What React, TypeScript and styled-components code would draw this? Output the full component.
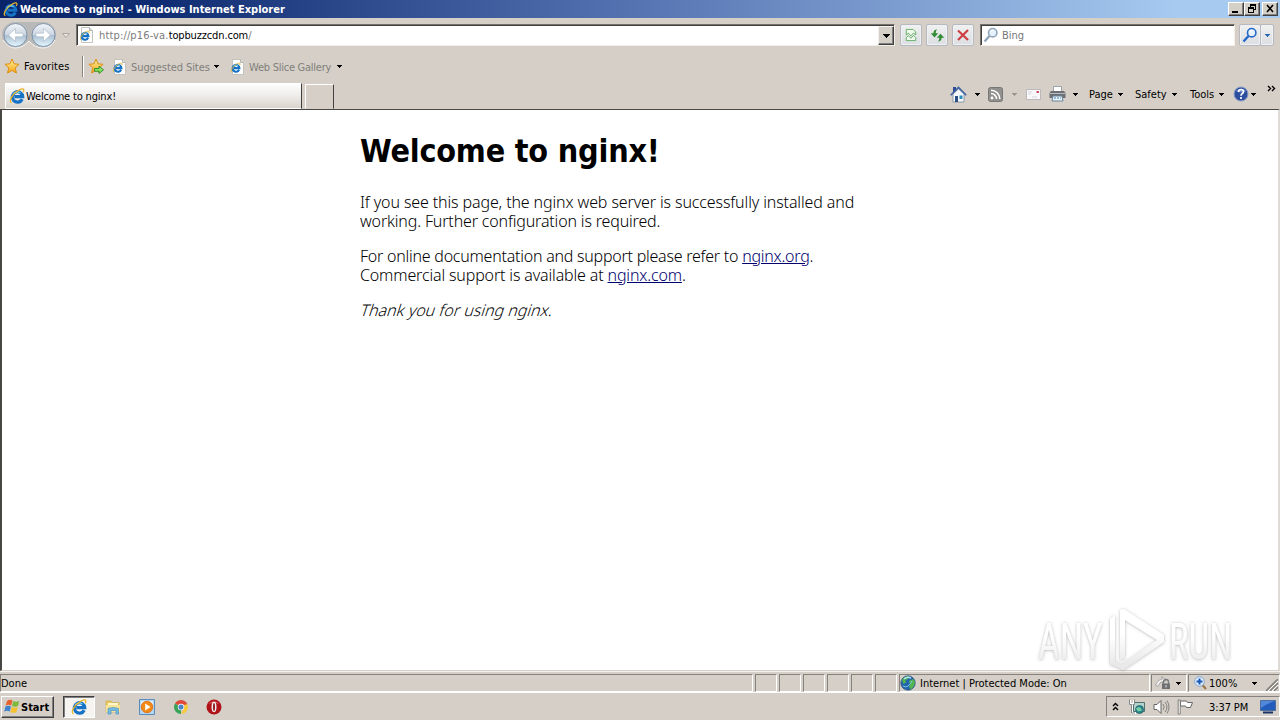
import React from 'react';
import styled, { createGlobalStyle } from 'styled-components';

const GlobalStyle = createGlobalStyle`
    * {
        box-sizing: border-box;
    }

    body {
        margin: 0;
        overflow: hidden;
        background: #d4d0c8;
        color: #000;
        font-family: "DejaVu Sans Condensed", "DejaVu Sans", sans-serif;
        font-stretch: condensed;
        font-size: 11px;
    }

    svg {
        flex: none;
    }
`

const Desktop = styled.div`
    position: relative;
    width: 1280px;
    height: 720px;
    display: flex;
    flex-direction: column;
    overflow: hidden;
    background: #d5cfc7;
`

const Row = styled.div<{ $h: number }>`
    display: flex;
    align-items: center;
    flex: none;
    height: ${p => p.$h}px;
`

const TitleBar = styled(Row)`
    padding: 0 2px 0 3px;
    background: linear-gradient(90deg, #0a246a 0%, #0f2c72 12%, #5674b2 50%, #a6caf0 92%);
`

const Label = styled.span<{ $ml?: number, $w?: number, $ls?: number, $color?: string, $bold?: boolean, $drop?: number }>`
    flex: none;
    margin-left: ${p => p.$ml || 0}px;
    padding-top: ${p => p.$drop ?? 2}px;
    width: ${p => p.$w ? p.$w + 'px' : 'auto'};
    letter-spacing: ${p => p.$ls || 0}px;
    color: ${p => p.$color || '#000'};
    font-weight: ${p => p.$bold ? 700 : 400};
    line-height: 14px;
    white-space: nowrap;
`

const Host = styled.span`
    color: #000;
    letter-spacing: -0.14px;
`

const Slot = styled.span<{ $ml?: number, $mt?: number }>`
    display: flex;
    flex: none;
    margin-left: ${p => p.$ml || 0}px;
    margin-top: ${p => p.$mt || 0}px;
`

const Spacer = styled.span`
    flex: 1;
`

const WindowButton = styled.span<{ $ml?: number }>`
    display: flex;
    width: 16px;
    height: 14px;
    margin-left: ${p => p.$ml || 0}px;
    background: #d4d0c8;
    border: 1px solid;
    border-color: #fff #404040 #404040 #fff;
    box-shadow: inset -1px -1px #808080;
`

const NavButtons = styled.div`
    display: flex;
    flex: none;
    width: 56px;
    height: 28px;
    margin-left: 1px;
`

const Field = styled.div<{ $ml: number, $w: number }>`
    display: flex;
    align-items: center;
    flex: none;
    width: ${p => p.$w}px;
    height: 22px;
    margin-left: ${p => p.$ml}px;
    background: #fff;
    border: 1px solid;
    border-color: #75726d #f2efe9 #f2efe9 #75726d;
    box-shadow: inset 1px 1px #403f3d;
`

const DropButton = styled.span`
    display: flex;
    align-items: center;
    justify-content: center;
    width: 16px;
    height: 19px;
    margin-top: 1px;
    background: #d4d0c8;
    border: 1px solid;
    border-color: #f4f2ee #404040 #404040 #f4f2ee;
    box-shadow: inset -1px -1px #808080;
`

const ToolButton = styled.span<{ $ml: number, $w?: number }>`
    display: flex;
    align-items: center;
    justify-content: center;
    flex: none;
    width: ${p => p.$w || 22}px;
    height: 22px;
    margin-left: ${p => p.$ml}px;
    border: 1px solid #b6bac0;
    border-radius: 2px;
    background: linear-gradient(#f1f1f1, #e4e6e8 50%, #dcdfe3);
    box-shadow: inset 0 0 0 1px #f0f1f2;
`

const Divider = styled.span<{ $h: number }>`
    width: 2px;
    height: ${p => p.$h}px;
    border-left: 1px solid #85827d;
    border-right: 1px solid #fff;
`

const TabRow = styled(Row)`
    align-items: flex-start;
`

const Tab = styled.div`
    display: flex;
    align-items: center;
    flex: none;
    width: 297px;
    height: 26px;
    margin: 2px 0 0 5px;
    padding-left: 3px;
    background: linear-gradient(#fefefe, #f0eeec 45%, #d9d4cd);
    border: 1px solid;
    border-color: #fff #404040 transparent #fff;
`

const NewTab = styled.div`
    flex: none;
    width: 29px;
    height: 25px;
    margin: 3px 0 0 3px;
    border: 1px solid;
    border-color: #fff transparent transparent #fff;
    border-right: 1px solid #404040;
`

const CommandBar = styled.div`
    display: flex;
    align-items: center;
    width: 330px;
    height: 26px;
`

const Viewport = styled.main`
    flex: none;
    height: 562px;
    background: #fff;
    border-top: 1px solid #484744;
    border-left: 2px solid #484744;
    border-right: 2px solid #dedad4;
    border-bottom: 1px solid #d4d0c8;
`

const Article = styled.article`
    width: 560px;
    margin-left: 358px;
    font-family: "Noto Sans", "Open Sans", sans-serif;
    font-weight: 300;
    font-size: 16px;
    line-height: 19px;
`

const Heading = styled.h1`
    margin: 0;
    padding-top: 22px;
    height: 83px;
    font-family: "DejaVu Sans Condensed", "DejaVu Sans", sans-serif;
    font-stretch: condensed;
    font-size: 32px;
    line-height: 39px;
    letter-spacing: -0.2px;
    white-space: nowrap;
`

const Line = styled.span<{ $ls: number }>`
    display: block;
    letter-spacing: ${p => p.$ls}px;
    white-space: nowrap;
`

const Slanted = styled.em`
    display: inline-block;
    margin-left: 1px;
    font-style: normal;
    transform: skewX(-18deg);
`

const Paragraph = styled.p`
    margin: 0 0 16px;
`

const Link = styled.a`
    color: #00006e;
    text-decoration: underline;
`

const StatusBar = styled(Row)`
    align-items: flex-start;
    padding-top: 2px;
    border-top: 1px solid #f3f1ed;
    border-bottom: 1px solid #fff;
`

const StatusCell = styled.div<{ $w: number, $ml?: number }>`
    display: flex;
    align-items: center;
    flex: none;
    width: ${p => p.$w}px;
    height: 18px;
    margin-left: ${p => p.$ml || 0}px;
    border: 1px solid;
    border-color: #85827d #fff #fff #85827d;
`

const Taskbar = styled(Row)`
    padding-left: 1px;
`

const StartButton = styled.div`
    display: flex;
    align-items: center;
    width: 53px;
    height: 22px;
    padding-left: 2px;
    border: 1px solid;
    border-color: #fff #404040 #404040 #fff;
    box-shadow: inset -1px -1px #808080;
`

const ActiveTask = styled.div`
    display: flex;
    align-items: center;
    justify-content: center;
    width: 32px;
    height: 22px;
    margin-left: 9px;
    background: #f6f4f1;
    border: 1px solid;
    border-color: #404040 #fff #fff #404040;
    box-shadow: inset 1px 1px #808080;
`

const Tray = styled.div`
    display: flex;
    align-items: center;
    width: 174px;
    height: 21px;
    border: 1px solid;
    border-color: #85827d #fff #fff #85827d;
`

const Watermark = styled.svg`
    position: absolute;
    left: 1030px;
    top: 601px;
`

type iconProps = {
    size?: number
    color?: string
}

const Arrow = ({ color = '#000' }: iconProps): JSX.Element => (
    <svg width="5" height="3" shapeRendering="crispEdges"><path d="M0 0h5v1H4v1H3v1H2V2H1V1H0z" fill={color} /></svg>
)

const Logo = (): JSX.Element => (
    <>
        <path d="M13.200 11.200A5.200 5.200 0 1 1 13.700 8.700H5.300" fill="none" stroke="#1672c4" strokeWidth="3.200" />
        <path d="M4 6Q7.500 2.700 11.500 4.800" fill="none" stroke="#65c4f3" strokeWidth="1.500" />
        <path d="M2.600 14.600C-1 14 3.300 5.500 10 2.100c4.300-2.200 5.800-1.100 4.200 2.200" fill="none" stroke="#e9b42a" strokeWidth="1.300" />
    </>
)

const IeIcon = ({ size = 16 }: iconProps): JSX.Element => (
    <svg width={size} height={size} viewBox="0 0 16 16"><Logo /></svg>
)

const PageIcon = (): JSX.Element => (
    <svg width="16" height="16" viewBox="0 0 16 16">
        <path d="M2.500.500h8l3 3v12h-11z" fill="#fdfdfd" stroke="#c3c2bd" />
        <path d="M10.500.500v3h3" fill="#ddd" stroke="#b5b5b0" />
        <g transform="translate(.5 3.500) scale(.65)"><Logo /></g>
    </svg>
)

const Star = ({ add }: { add?: boolean }): JSX.Element => (
    <svg width="17" height="17" viewBox="0 0 17 17">
        <defs>
            <linearGradient id="gold" x1="0" y1="0" x2="0" y2="1"><stop stopColor="#fff2a0" /><stop offset="1" stopColor="#f5a313" /></linearGradient>
        </defs>
        <path d="M8 1l2.100 4.800 5 .5-3.800 3.500 1.100 5.200L8 12.400 3.600 15l1.100-5.200L.9 6.300l5-.5z" fill="url(#gold)" stroke="#de8e16" />
        {add && <path d="M6.500 10.500H11V8.200l4.500 3.600-4.500 3.600v-2.200H6.500z" fill="#8be25f" stroke="#25892b" strokeWidth=".9" />}
    </svg>
)

const BackForward = (): JSX.Element => (
    <svg width="56" height="28" viewBox="0 0 56 28">
        <defs>
            <linearGradient id="orb" x1="0" y1="0" x2="0" y2="1">
                <stop stopColor="#f4f6f9" /><stop offset=".48" stopColor="#ccd6e2" /><stop offset=".5" stopColor="#a9bdd0" /><stop offset="1" stopColor="#e5f7ff" />
            </linearGradient>
        </defs>
        <path d="M14 1h28a13 13 0 0 1 0 26q-8 0-14-7-6 7-14 7a13 13 0 0 1 0-26z" fill="#bab9ba" />
        <path d="M2 19q5 8 12 8 8 0 14-7 6 7 14 7 8 0 12-8" fill="none" stroke="#f5f4f2" />
        {[14.5, 42.5].map(x => <circle key={x} cx={x} cy="14" r="11.500" fill="url(#orb)" stroke="#7d93a9" />)}
        <path d="M14.500 7.500L7.500 14l7 6.500v-4.700H22v-3.600h-7.500z" fill="#fff" stroke="#a3b4c4" strokeWidth=".6" />
        <path d="M42.500 7.500l7 6.500-7 6.500v-4.700H35v-3.600h7.500z" fill="#fff" stroke="#a3b4c4" strokeWidth=".6" />
    </svg>
)

const Magnifier = ({ color = '#2468c8' }: iconProps): JSX.Element => (
    <svg width="16" height="16" viewBox="0 0 16 16">
        <path d="M1.500 14.500l5-5.500" stroke={color} strokeWidth="2.400" />
        <circle cx="9.700" cy="5.700" r="4.200" fill="#e5f1fc" stroke={color} strokeWidth="1.600" />
        <path d="M7.500 5q1-2 3-1.700" fill="none" stroke="#fff" />
    </svg>
)

const BrokenPage = (): JSX.Element => (
    <svg width="12" height="14" viewBox="0 0 14 16">
        <path d="M1.500 8V1.500h8l3 3V8L10 5.500 7 9 4 5.800z" fill="#f0faec" stroke="#57a857" />
        <path d="M1.500 14.500V11L4 8.800l3 3 3-3.300 2.500 2.500v3.500z" fill="#f0faec" stroke="#57a857" />
    </svg>
)

const Refresh = (): JSX.Element => (
    <svg width="15" height="15" viewBox="0 0 16 16" fill="#328c35">
        <path d="M7.500 1.500Q3.600 1.800 3.600 5.500H.8L4.800 10 8.800 5.500H6q0-2.500 1.500-4z" />
        <path d="M8.500 14.500q3.900-.3 3.900-4h2.800L11.200 6l-4 4.500H10q0 2.500-1.500 4z" />
    </svg>
)

const House = (): JSX.Element => (
    <svg width="17" height="17" viewBox="0 0 17 17">
        <path d="M3 1h3v5H3z" fill="#304a95" />
        <path d="M3 8l5.500-5L14 8v8H3z" fill="#f5f8fb" stroke="#7a8ba0" strokeWidth=".8" />
        <path d="M.8 9.200l7.700-7.700 7.700 7.700" fill="none" stroke="#3d629f" strokeWidth="1.600" />
        <path d="M5 10h3v6H5z" fill="#2b4f86" />
        <path d="M9.500 9.500h3V13h-3z" fill="#2d8fbd" />
    </svg>
)

const Rss = (): JSX.Element => (
    <svg width="15" height="15" viewBox="0 0 15 15">
        <rect x=".5" y=".5" width="14" height="14" rx="2" fill="#92908d" stroke="#777" />
        <circle cx="4" cy="11" r="1.400" fill="#fff" />
        <path d="M3 6.500a5.500 5.500 0 0 1 5.500 5.500M3 3.200A8.800 8.800 0 0 1 11.800 12" fill="none" stroke="#fff" strokeWidth="1.600" />
    </svg>
)

const Mail = (): JSX.Element => (
    <svg width="15" height="11" viewBox="0 0 15 11">
        <path d="M.5.500h14v10H.5z" fill="#faf9fa" stroke="#bab8bc" />
        <path d="M2 3h4M2 5h3M6 8h5" stroke="#d4d3dd" />
        <path d="M10.500 2h2.500v2h-2.500z" fill="#cf4c66" />
    </svg>
)

const Printer = (): JSX.Element => (
    <svg width="17" height="16" viewBox="0 0 17 16">
        <path d="M4.500.500h8V6h-8z" fill="#fff" stroke="#9aa2aa" />
        <path d="M2 5h13l1.500 2v5h-16V7z" fill="#6d6f73" />
        <path d="M1 7h15v1H1z" fill="#b9bcc0" />
        <path d="M4 10h9l1 5H3z" fill="#eaf3fa" stroke="#69859d" />
        <path d="M5 12h7" stroke="#3e83b5" strokeDasharray="2 1" />
    </svg>
)

const Help = (): JSX.Element => (
    <svg width="16" height="16" viewBox="0 0 16 16">
        <circle cx="8" cy="8" r="7" fill="#2d4e9e" stroke="#8b9dc8" />
        <path d="M3 5a6 5 0 0 1 10 0q-5 3-10 0z" fill="#6c8cd0" />
        <path d="M5.500 6q.2-2.500 2.600-2.500 2.400 0 2.400 2.100 0 1.400-1.400 2.100Q8 8.300 8 9.800M8 11v2" fill="none" stroke="#fff" strokeWidth="1.700" />
    </svg>
)

const Chevrons = ({ up }: { up?: boolean }): JSX.Element => (
    up
        ? <svg width="7" height="9" viewBox="0 0 7 9"><path d="M1 4l2.500-2.500L6 4M1 8l2.500-2.500L6 8" fill="none" stroke="#000" strokeWidth="1.400" /></svg>
        : <svg width="9" height="7" viewBox="0 0 9 7"><path d="M1 1l2.500 2.500L1 6M5 1l2.500 2.500L5 6" fill="none" stroke="#000" strokeWidth="1.400" /></svg>
)

const Globe = (): JSX.Element => (
    <svg width="16" height="16" viewBox="0 0 16 16">
        <circle cx="8" cy="8" r="7.200" fill="#2565ad" stroke="#365782" strokeWidth=".8" />
        <path d="M2 5Q5 0 10 1.500L8 4 5.500 5 6 7.500 3.500 9zM9 6l4-2 2 3-1 4-3 3.500L9 12l1-3z" fill="#52b54d" />
        <path d="M4 4q3-3 7-1" fill="none" stroke="#b3e4f5" strokeWidth="1.400" />
        <path d="M3 11q5 3 9-5" fill="none" stroke="#73c9ec" />
    </svg>
)

const Lock = (): JSX.Element => (
    <svg width="16" height="16" viewBox="0 0 16 16">
        <path d="M.5 10q2.500-6 7-6l-1-2.500 4.500 3.500-3.500 3.500V6.500Q5 6.500 3 11.500z" fill="#f3f2f0" stroke="#98979a" strokeWidth=".8" />
        <path d="M8.500 9V7a2.500 2.500 0 0 1 5 0v2" fill="none" stroke="#77797d" strokeWidth="1.300" />
        <path d="M7 8.500h8V14H7z" fill="#6f7073" />
        <path d="M11 10v2.500" stroke="#ddd" />
    </svg>
)

const ZoomIn = (): JSX.Element => (
    <svg width="13" height="14" viewBox="0 0 13 14">
        <path d="M8 8.500l4 4.500" stroke="#9b7447" strokeWidth="2" />
        <circle cx="5.500" cy="5.500" r="4.800" fill="#e3f0fc" stroke="#7da4d0" />
        <path d="M5.500 2.500v6M2.500 5.500h6" stroke="#1757b5" strokeWidth="2" />
    </svg>
)

const Grip = (): JSX.Element => (
    <svg width="12" height="12" viewBox="0 0 12 12">
        <path d="M0 12L12 0M4 12l8-8M8 12l4-4" stroke="#85827d" strokeWidth="1.600" />
        <path d="M2 12L12 2M6 12l6-6" stroke="#fff" />
    </svg>
)

const WindowsFlag = (): JSX.Element => (
    <svg width="16" height="15" viewBox="0 0 16 15">
        <path d="M3 2q3-2 5.500-.5L7.200 6.600Q4.500 5 1.700 6.700z" fill="#e8602c" />
        <path d="M9.300 2q3 1.400 6 0L14 7q-3 1.600-6 0z" fill="#7fb83b" />
        <path d="M1.500 7.600Q4.300 6 7 7.500l-1.300 5Q3 11 .2 12.700z" fill="#3d83ce" />
        <path d="M7.800 8q3 1.500 6 0l-1.300 5q-3 1.700-6 0z" fill="#f5c12e" />
    </svg>
)

const Explorer = (): JSX.Element => (
    <svg width="16" height="16" viewBox="0 0 16 16">
        <path d="M1 2h5l1 1.500h7V13H1z" fill="#e9c75c" stroke="#cfab48" strokeWidth=".6" />
        <path d="M3 4h10v3H3z" fill="#fff7cd" />
        <path d="M1 6h14v7H1z" fill="#f8e494" />
        <path d="M3 15V9.500Q8 7.500 13.500 9.500V15H11v-3.500H6V15z" fill="#74bce4" stroke="#4d94c5" strokeWidth=".7" />
    </svg>
)

const MediaPlayer = (): JSX.Element => (
    <svg width="16" height="16" viewBox="0 0 16 16">
        <path d="M.5.500h15v15H.5z" fill="#b5d5ef" stroke="#588dbf" />
        <path d="M2 2h12v4H2z" fill="#dcecf8" />
        <circle cx="8" cy="8" r="5.700" fill="#f28a15" stroke="#e3771c" />
        <path d="M6.200 4.500L11.500 8l-5.300 3.500z" fill="#fff" />
    </svg>
)

const Chrome = (): JSX.Element => (
    <svg width="14" height="14" viewBox="0 0 16 16">
        <path d="M8 8L1.100 4A8 8 0 0 1 14.900 4z" fill="#df4939" />
        <path d="M8 8V16A8 8 0 0 1 1.100 4z" fill="#3ba259" />
        <path d="M8 8L14.900 4A8 8 0 0 1 8 16l3-6z" fill="#f6ca3b" />
        <path d="M8 4.500h7.100" stroke="#df4939" />
        <circle cx="8" cy="8" r="3.700" fill="#fff" />
        <circle cx="8" cy="8" r="2.900" fill="#4d82cb" />
    </svg>
)

const Opera = (): JSX.Element => (
    <svg width="16" height="16" viewBox="0 0 16 16">
        <circle cx="8" cy="8" r="7.500" fill="#b01217" />
        <path d="M2.500 5a6.500 6 0 0 1 11 0q-5-2-11 0z" fill="#d6545a" />
        <ellipse cx="8" cy="8" rx="2.500" ry="5.200" fill="#eee" />
        <ellipse cx="8" cy="8" rx="1" ry="4" fill="#91151a" />
    </svg>
)

const Network = (): JSX.Element => (
    <svg width="16" height="16" viewBox="0 0 16 16">
        <path d="M4.500 3.500h11v9h-11z" fill="#b4d3cc" stroke="#53706e" />
        <path d="M1 1v4h4V1M3 5v9h4" fill="none" stroke="#fff" strokeWidth="2" />
        <path d="M.5.500v5h2V14H6M5.500.500v5h-2" fill="none" stroke="#626d6c" strokeWidth=".8" />
        <circle cx="10.500" cy="10.500" r="4" fill="#24858a" stroke="#376f73" />
        <path d="M7 9.500q3-3 5 0l1 2-4 1z" fill="#75d0a8" />
    </svg>
)

const Speaker = (): JSX.Element => (
    <svg width="17" height="16" viewBox="0 0 17 16">
        <path d="M1 5.500h3L8 1.500v13l-4-4H1z" fill="#fff" stroke="#666" />
        <path d="M10 5q2.500 3 0 6M12 3q4 5 0 10M14 1.500q4 6.500 0 13" fill="none" stroke="#85837f" />
    </svg>
)

const Flag = (): JSX.Element => (
    <svg width="17" height="16" viewBox="0 0 17 16">
        <path d="M3.500 2h6l1 1.500h5l-2 5h-4L8.500 7h-5z" fill="#fff" stroke="#666" />
        <path d="M1.200 1v14h2V1z" fill="#fff" stroke="#686764" strokeWidth=".8" />
    </svg>
)

const Monitor = (): JSX.Element => (
    <svg width="16" height="14" viewBox="0 0 16 14">
        <path d="M.5.500h15v10H.5z" fill="#235cba" stroke="#4d6e9d" />
        <path d="M1 1h14Q8 3 1 8z" fill="#5188dc" />
        <path d="M3 11.500h10v2H3z" fill="#163466" />
    </svg>
)

const menus = [
    { name: 'Page', ml: 11, w: 29 },
    { name: 'Safety', ml: 12, w: 37 },
    { name: 'Tools', ml: 13, w: 29 },
]

const App = (): JSX.Element => {
    return (
        <Desktop>
            <GlobalStyle />
            <TitleBar $h={18}>
                <IeIcon size={15} />
                <Label $ml={2} $bold $color="#fff">Welcome to nginx! - Windows Internet Explorer</Label>
                <Spacer />
                <WindowButton><svg width="14" height="12"><path d="M3 8h6v2H3z" /></svg></WindowButton>
                <WindowButton>
                    <svg width="14" height="12" shapeRendering="crispEdges">
                        <path d="M5 1h6v6H9V6h1V3H6v1H5zM3 4h6v6H3zM4 6v3h4V6z" fillRule="evenodd" />
                    </svg>
                </WindowButton>
                <WindowButton $ml={2}><svg width="14" height="12"><path d="M4 2l6 7M10 2L4 9" stroke="#000" strokeWidth="1.600" /></svg></WindowButton>
            </TitleBar>

            <Row $h={34}>
                <NavButtons><BackForward /></NavButtons>
                <Slot $ml={5}><svg width="8" height="5"><path d="M.5.500h7L4 4.500z" fill="#e7e3de" stroke="#aaa69e" /></svg></Slot>
                <Field $ml={6} $w={819}>
                    <Slot $ml={2}><PageIcon /></Slot>
                    <Label $ml={4} $ls={0.15} $color="#7c7c7c">http://p16-va.<Host>topbuzzcdn.com</Host>/</Label>
                    <Spacer />
                    <DropButton><svg width="7" height="4" shapeRendering="crispEdges"><path d="M0 0h7v1H6v1H5v1H4v1H3V3H2V2H1V1H0z" /></svg></DropButton>
                </Field>
                <ToolButton $ml={5}><BrokenPage /></ToolButton>
                <ToolButton $ml={4}><Refresh /></ToolButton>
                <ToolButton $ml={4}><svg width="12" height="12"><path d="M1 1.500l10 9.500M11 1L1 11" stroke="#cd3f42" strokeWidth="2.200" /></svg></ToolButton>
                <Field $ml={6} $w={255}>
                    <Slot $ml={2}><Magnifier color="#91a5b9" /></Slot>
                    <Label $ml={3} $color="#777">Bing</Label>
                </Field>
                <ToolButton $ml={4} $w={22}><Magnifier /></ToolButton>
                <ToolButton $ml={-1} $w={14}><Arrow color="#2868b0" /></ToolButton>
            </Row>

            <Row $h={29}>
                <Slot $ml={4}><Star /></Slot>
                <Label $ml={3} $w={58} $ls={0.1} $drop={0}>Favorites</Label>
                <Divider $h={21} />
                <Slot $ml={4}><Star add /></Slot>
                <Slot $ml={7}><PageIcon /></Slot>
                <Label $ml={3} $w={83} $ls={-0.08} $color="#817f7b">Suggested Sites</Label>
                <Arrow />
                <Slot $ml={11}><PageIcon /></Slot>
                <Label $ml={3} $w={88} $ls={-0.25} $color="#817f7b">Web Slice Gallery</Label>
                <Arrow />
            </Row>

            <TabRow $h={28}>
                <Tab>
                    <IeIcon />
                    <Label $ml={1} $ls={-0.17}>Welcome to nginx!</Label>
                </Tab>
                <NewTab />
                <Spacer />
                <CommandBar>
                    <House />
                    <Slot $ml={8}><Arrow /></Slot>
                    <Slot $ml={8}><Rss /></Slot>
                    <Slot $ml={9}><Arrow color="#99958e" /></Slot>
                    <Slot $ml={9}><Mail /></Slot>
                    <Slot $ml={8}><Printer /></Slot>
                    <Slot $ml={7}><Arrow /></Slot>
                    {menus.map(m => (
                        <React.Fragment key={m.name}>
                            <Label $ml={m.ml} $w={m.w}>{m.name}</Label>
                            <Arrow />
                        </React.Fragment>
                    ))}
                    <Slot $ml={9}><Help /></Slot>
                    <Slot $ml={2}><Arrow /></Slot>
                    <Slot $ml={11} $mt={-12}><Chevrons /></Slot>
                </CommandBar>
            </TabRow>

            <Viewport>
                <Article>
                    <Heading>Welcome to nginx!</Heading>
                    <Paragraph>
                        <Line $ls={-0.12}>If you see this page, the nginx web server is successfully installed and</Line>
                        <Line $ls={-0.16}>working. Further configuration is required.</Line>
                    </Paragraph>
                    <Paragraph>
                        <Line $ls={-0.24}>For online documentation and support please refer to <Link>nginx.org</Link>.</Line>
                        <Line $ls={-0.15}>Commercial support is available at <Link>nginx.com</Link>.</Line>
                    </Paragraph>
                    <Paragraph>
                        <Line $ls={0}><Slanted>Thank you for using nginx.</Slanted></Line>
                    </Paragraph>
                </Article>
            </Viewport>

            <StatusBar $h={22}>
                <StatusCell $w={753}><Label>Done</Label></StatusCell>
                {[0, 1, 2, 3, 4, 5].map(i => <StatusCell key={i} $ml={2} $w={22} />)}
                <StatusCell $ml={2} $w={251}>
                    <Globe />
                    <Label $ml={4}>Internet | Protected Mode: On</Label>
                </StatusCell>
                <StatusCell $ml={1} $w={36}>
                    <Slot $ml={3}><Lock /></Slot>
                    <Slot $ml={5}><Arrow /></Slot>
                </StatusCell>
                <StatusCell $ml={1} $w={92}>
                    <Slot $ml={5}><ZoomIn /></Slot>
                    <Label $ml={2} $w={43}>100%</Label>
                    <Arrow />
                    <Slot $ml={9} $mt={4}><Grip /></Slot>
                </StatusCell>
            </StatusBar>

            <Taskbar $h={27}>
                <StartButton>
                    <WindowsFlag />
                    <Label $ml={1} $bold>Start</Label>
                </StartButton>
                <ActiveTask><IeIcon /></ActiveTask>
                <Slot $ml={10}><Explorer /></Slot>
                <Slot $ml={18}><MediaPlayer /></Slot>
                <Slot $ml={19}><Chrome /></Slot>
                <Slot $ml={18}><Opera /></Slot>
                <Spacer />
                <Tray>
                    <Slot $ml={5}><Chevrons up /></Slot>
                    <Slot $ml={10}><Network /></Slot>
                    <Slot $ml={8}><Speaker /></Slot>
                    <Slot $ml={7}><Flag /></Slot>
                    <Label $ml={15} $w={51} $ls={-0.1}>3:37 PM</Label>
                    <Monitor />
                </Tray>
            </Taskbar>

            <Watermark width="212" height="76" viewBox="0 0 212 76">
                <defs>
                    <filter id="soft" x="-10%" y="-20%" width="120%" height="150%">
                        <feDropShadow dx="0" dy="0.5" stdDeviation="1.500" floodColor="#666" floodOpacity=".5" />
                    </filter>
                    <linearGradient id="fade" x1="0" y1="0" x2="0" y2="1"><stop offset=".4" stopColor="#fff" /><stop offset=".9" stopColor="#e9e9e9" /></linearGradient>
                </defs>
                <g filter="url(#soft)" fill="url(#fade)" fontFamily="Roboto, sans-serif" fontSize="49">
                    <text transform="translate(8 58) scale(.75 1)" textLength="86" lengthAdjust="spacingAndGlyphs">ANY</text>
                    <text transform="translate(139 58) scale(.75 1)" textLength="84" lengthAdjust="spacingAndGlyphs">RUN</text>
                    <path d="M80 18l5-4v46l7 4v4L80 63z" />
                    <path d="M90 9l4-1 40 26v7L93 69l-4-2 3-4 35-24L95 19v37l-5 4z" />
                </g>
            </Watermark>
        </Desktop>
    )
}

export default App
